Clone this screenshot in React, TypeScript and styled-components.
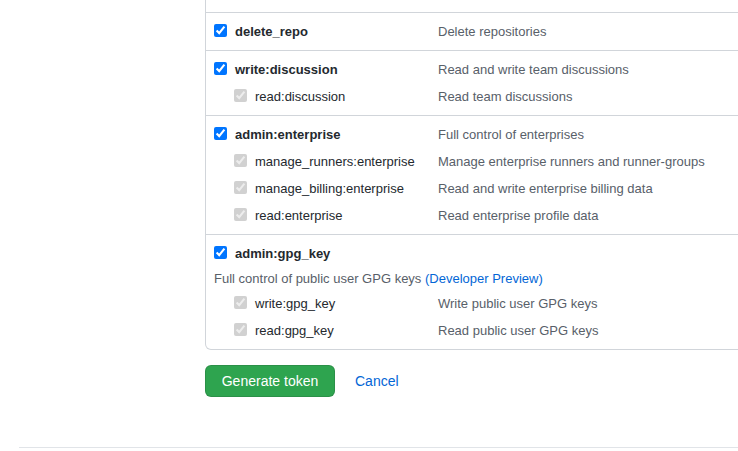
import React from "react";
import styled, { createGlobalStyle } from "styled-components";

const Global = createGlobalStyle`
  html, body { margin: 0; padding: 0; background: #fff; overflow: hidden; }
  body { font-family: "Liberation Sans", Arial, sans-serif; color: #24292e; }
`;

const Page = styled.div`
  width: 738px;
  height: 451px;
  overflow: hidden;
  display: flex;
  flex-direction: column;
`;

const Main = styled.div`
  padding-left: 205px;
  display: flex;
  flex-direction: column;
`;

const ScopeBox = styled.div`
  width: 700px;
  border: 1px solid #d1d5da;
  border-top: none;
  border-radius: 0 0 6px 6px;
`;

const Spacer = styled.div`
  height: 12px;
  border-bottom: 1px solid #d1d5da;
`;

const Group = styled.div<{ $last?: boolean }>`
  padding: 5px 0 5px 8px;
  border-bottom: ${(p) => (p.$last ? "none" : "1px solid #d1d5da")};
`;

const Row = styled.div<{ $sub?: boolean }>`
  display: flex;
  align-items: center;
  height: 27px;
  font-size: 13px;
  padding-left: ${(p) => (p.$sub ? "20px" : "0")};
`;

const Check = styled.input`
  width: 13px;
  height: 13px;
  margin: 0 8px 3px 0;
  flex: none;
  accent-color: #0075ff;
`;

const Name = styled.span<{ $sub?: boolean; $w: number }>`
  width: ${(p) => p.$w}px;
  flex: none;
  font-weight: ${(p) => (p.$sub ? "normal" : "bold")};
  color: #24292e;
`;

const Desc = styled.span`
  color: #586069;
`;

const GroupNote = styled.p`
  margin: 0;
  box-sizing: border-box;
  height: 23px;
  padding-top: 1px;
  line-height: 22px;
  font-size: 13px;
  color: #586069;
`;

const Link = styled.a`
  color: #0366d6;
  text-decoration: none;
`;

const Actions = styled.div`
  display: flex;
  align-items: center;
  gap: 20px;
  margin-top: 15px;
`;

const Button = styled.button`
  width: 130px;
  height: 32px;
  padding: 0;
  font-family: "Liberation Sans", Arial, sans-serif;
  font-size: 14px;
  color: #fff;
  background: #2ea44f;
  border: 1px solid rgba(27, 31, 35, 0.15);
  border-radius: 6px;
`;

const Cancel = styled.a`
  font-size: 14px;
  color: #0366d6;
  text-decoration: none;
`;

const Footer = styled.div`
  margin: 50px 0 0 19px;
  border-top: 1px solid #e1e4e8;
`;

type Scope = { name: string; desc?: string; sub?: boolean };

const ScopeRow = ({ name, desc, sub }: Scope) => (
  <Row $sub={sub}>
    <Check type="checkbox" checked disabled={sub} readOnly />
    <Name $sub={sub} $w={sub ? 183 : 203}>{name}</Name>
    {desc && <Desc>{desc}</Desc>}
  </Row>
);

export default function App() {
  return (
    <Page>
      <Global />
      <Main>
        <ScopeBox>
          <Spacer />
          <Group>
            <ScopeRow name="delete_repo" desc="Delete repositories" />
          </Group>
          <Group>
            <ScopeRow name="write:discussion" desc="Read and write team discussions" />
            <ScopeRow sub name="read:discussion" desc="Read team discussions" />
          </Group>
          <Group>
            <ScopeRow name="admin:enterprise" desc="Full control of enterprises" />
            <ScopeRow sub name="manage_runners:enterprise" desc="Manage enterprise runners and runner-groups" />
            <ScopeRow sub name="manage_billing:enterprise" desc="Read and write enterprise billing data" />
            <ScopeRow sub name="read:enterprise" desc="Read enterprise profile data" />
          </Group>
          <Group $last>
            <ScopeRow name="admin:gpg_key" />
            <GroupNote>
              Full control of public user GPG keys <Link href="#">(Developer Preview)</Link>
            </GroupNote>
            <ScopeRow sub name="write:gpg_key" desc="Write public user GPG keys" />
            <ScopeRow sub name="read:gpg_key" desc="Read public user GPG keys" />
          </Group>
        </ScopeBox>
        <Actions>
          <Button type="button">Generate token</Button>
          <Cancel href="#">Cancel</Cancel>
        </Actions>
      </Main>
      <Footer />
    </Page>
  );
}
